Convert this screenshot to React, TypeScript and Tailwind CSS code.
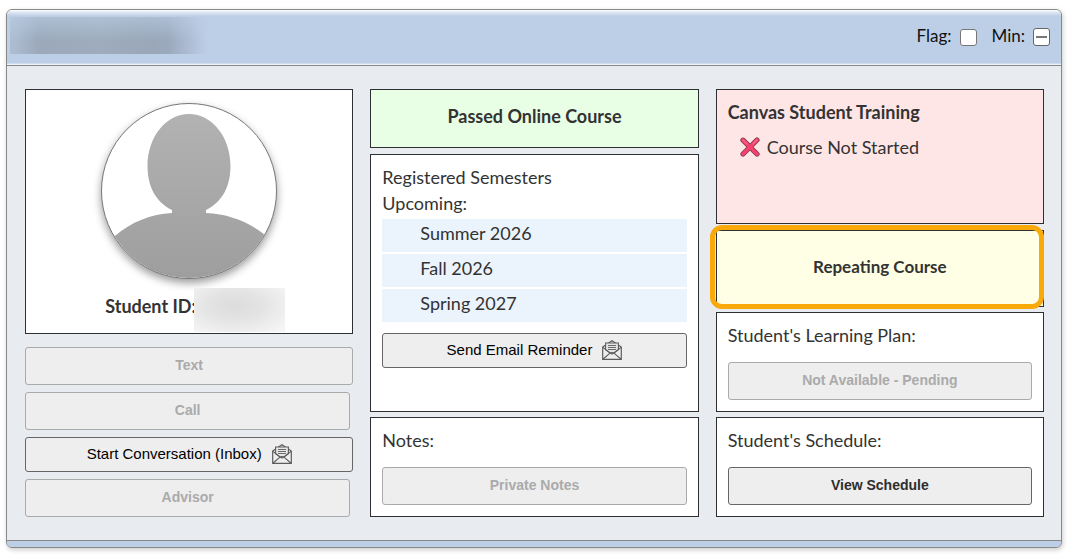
import type { ReactNode } from 'react'
import clsx from 'clsx'

const semesters = ['Summer 2026', 'Fall 2026', 'Spring 2027']

function EnvelopeIcon() {
  return (
    <svg className="w-5 h-5 shrink-0" viewBox="0 0 20 20" fill="none" stroke="#5c5c5c" aria-hidden="true">
      <path d="M0.7 7 10 0.7 19.3 7V19.3H0.7Z" fill="#eee" strokeWidth="1.2" />
      <path d="M3.6 9.8V3h12.8v6.8L10 14.2Z" fill="#e6e6e6" strokeWidth="1.1" />
      <path d="M6 5.5h8M6 7.5h8M6 9.5h8" strokeWidth="0.9" />
      <path d="m1 7.4 7 5.8M19 7.4l-7 5.8M1.2 19 8 13.2q2-1.2 4 0l6.8 5.8" strokeWidth="1.1" />
    </svg>
  )
}

function CrossIcon() {
  return (
    <svg className="w-5 h-5 shrink-0" viewBox="0 0 20 20" fill="none" strokeLinecap="round" aria-hidden="true">
      <path d="M3 3.2 17 17M17 3 3 17" stroke="#7a3f4c" strokeWidth="5.2" />
      <path d="M3 3.2 17 17M17 3 3 17" stroke="#f8406e" strokeWidth="3.6" />
      <path d="m3 2.8 4 4M17 2.8l-4 4" stroke="#ff6b8f" strokeWidth="1.2" />
    </svg>
  )
}

function Silhouette() {
  return (
    <svg className="w-full h-full" viewBox="0 0 174 174" aria-hidden="true">
      <defs>
        <linearGradient id="silhouette" x1="0" y1="0" x2="0" y2="1">
          <stop offset="0" stopColor="#b2b2b2" />
          <stop offset="1" stopColor="#9e9e9e" />
        </linearGradient>
      </defs>
      <path
        fill="url(#silhouette)"
        d="M87 10C110 10 128.5 33 128.5 62C128.5 83 120 98 104 106V109C127 110 147 118 163 131L174 142V174H0V142L13 132C29 118 49 110 70 109V106C54 98 45.5 83 45.5 62C45.5 33 64 10 87 10Z"
      />
    </svg>
  )
}

interface ActionButtonProps {
  children: ReactNode
  disabled?: boolean
  className?: string
}

function ActionButton({ children, disabled, className }: ActionButtonProps) {
  return (
    <button
      type="button"
      disabled={disabled}
      className={clsx(
        'block h-[38px] rounded-[3px] border bg-[#eee] pb-[2px] text-[14px] leading-5 font-bold',
        disabled ? 'border-[#aaa] text-[#aaa]' : 'border-[#666] text-[#2d2d2d]',
        className ?? 'w-full'
      )}
    >
      {children}
    </button>
  )
}

function MailButton({ children }: { children: ReactNode }) {
  return (
    <button
      type="button"
      className="flex w-full h-[35px] items-center justify-center gap-[10px] rounded-[3px] border border-[#666] bg-[#eee] pb-[2px] text-[15px] leading-5 text-black"
    >
      {children}
      <EnvelopeIcon />
    </button>
  )
}

interface PanelProps {
  children: ReactNode
  className?: string
}

function Panel({ children, className }: PanelProps) {
  return <section className={clsx('border border-[#2d2f33] px-[11px]', className)}>{children}</section>
}

export default function App() {
  return (
    <div className="bg-white pt-[9px] pl-[6px] pr-4 pb-[10px] font-['Lato',sans-serif] text-[18px] leading-[26px] text-[#333]">
      <main className="overflow-hidden rounded-md border border-[#888] bg-[#e8ebf0] shadow-[1px_2px_5px_rgba(0,0,0,0.2)]">
        <header className="flex h-14 items-center justify-between border-b border-[#888] bg-[linear-gradient(to_bottom,#fff_0,#e3e9f3_2px,#bdcfe7_6px,#bdcfe7_53px,#fff_55px)] pl-[3px] pr-[11px]">
          <div className="h-[37px] w-[198px] -mt-[5px] bg-[linear-gradient(to_bottom,rgba(189,207,231,0.55)_0,rgba(189,207,231,0)_65%),linear-gradient(to_right,#adbdd4_0,#aab9ce_8px,#9ba9bb_28px,#9eacbd_90px,#99a7b9_140px,#9ba9bc_158px,#b5c5de_188px,#bdcfe7_198px)]" />
          <div className="flex items-center -mt-[3px] text-[17px] text-[#111]">
            <label htmlFor="flag" className="mr-2">Flag:</label>
            <input
              id="flag"
              type="checkbox"
              className="mt-[2px] mr-[15px] h-[17px] w-[17px] appearance-none rounded-[3px] border border-[#777] bg-white"
            />
            <span id="min-label" className="mr-2">Min:</span>
            <button
              type="button"
              aria-labelledby="min-label"
              className="mt-px flex h-[18px] w-[17px] items-center justify-center rounded-[3px] border border-[#666] bg-white"
            >
              <span className="h-[2px] w-[11px] bg-[#777]" />
            </button>
          </div>
        </header>

        <div className="grid grid-cols-3 gap-[17px] pt-[23px] pb-[23px] pl-[18px] pr-[17px]">
          {/* Student */}
          <div className="font-['Liberation_Sans',sans-serif]">
            <section className="mb-[13px] border border-[#2d2f33] bg-white pt-[13px] pb-px font-['Lato',sans-serif]">
              <div className="mx-auto h-44 w-44 overflow-hidden rounded-full border border-[#777] bg-white shadow-[0_4px_8px_rgba(0,0,0,0.4)]">
                <Silhouette />
              </div>
              <div className="mt-[9px] flex items-center justify-center pl-3">
                <span className="pb-2 font-bold">Student ID:</span>
                <span className="-ml-[2px] h-11 w-[91px] bg-[radial-gradient(ellipse_at_45%_40%,#dcdcdc_0%,#e4e4e4_40%,#f5f5f5_90%)]" />
              </div>
            </section>
            <div className="flex flex-col gap-[7px]">
              <ActionButton disabled>Text</ActionButton>
              <ActionButton disabled className="mr-[3px]">Call</ActionButton>
              <MailButton>Start Conversation (Inbox)</MailButton>
              <ActionButton disabled className="mr-[3px]">Advisor</ActionButton>
            </div>
          </div>

          {/* Courses and semesters */}
          <div className="flex flex-col">
            <Panel className="mb-[6px] bg-[#e9ffe5] pt-[13px] pb-[18px] text-center">
              <h2 className="font-bold">Passed Online Course</h2>
            </Panel>
            <Panel className="mb-[5px] grow bg-white pt-[9px]">
              <p>Registered Semesters</p>
              <p>Upcoming:</p>
              <ul className="mt-[3px] mb-[11px] flex flex-col gap-[2px]">
                {semesters.map((semester) => (
                  <li key={semester} className="bg-[#ebf3fc] pt-px pb-[6px] pl-[38px]">
                    {semester}
                  </li>
                ))}
              </ul>
              <div className="font-['Liberation_Sans',sans-serif]">
                <MailButton>Send Email Reminder</MailButton>
              </div>
            </Panel>
            <Panel className="bg-white pt-[9px] pb-[11px]">
              <p className="mb-[14px]">Notes:</p>
              <div className="font-['Liberation_Sans',sans-serif]">
                <ActionButton disabled>Private Notes</ActionButton>
              </div>
            </Panel>
          </div>

          {/* Training, plan and schedule */}
          <div className="flex flex-col">
            <Panel className="mb-[6px] grow bg-[#ffe6e6] pt-[9px]">
              <h2 className="font-bold">Canvas Student Training</h2>
              <div className="mt-[9px] flex items-center gap-[7px] pl-3">
                <CrossIcon />
                <span>Course Not Started</span>
              </div>
            </Panel>
            <Panel className="relative mb-[5px] bg-[#ffffe5] pt-[23px] pb-[26px] text-center">
              <h2 className="text-[17px] font-bold">Repeating Course</h2>
              <div className="pointer-events-none absolute -top-[6px] -right-px -bottom-[3px] -left-[7px] rounded-xl border-[5px] border-[#f9a90a]" />
            </Panel>
            <Panel className="mb-[5px] bg-white pt-[9px] pb-[11px]">
              <p className="mb-[14px]">Student's Learning Plan:</p>
              <div className="font-['Liberation_Sans',sans-serif]">
                <ActionButton disabled>Not Available - Pending</ActionButton>
              </div>
            </Panel>
            <Panel className="bg-white pt-[9px] pb-[11px]">
              <p className="mb-[14px]">Student's Schedule:</p>
              <div className="font-['Liberation_Sans',sans-serif]">
                <ActionButton>View Schedule</ActionButton>
              </div>
            </Panel>
          </div>
        </div>

        <footer className="h-[7px] border-t border-[#888] bg-[#bdcfe7]" />
      </main>
    </div>
  )
}
